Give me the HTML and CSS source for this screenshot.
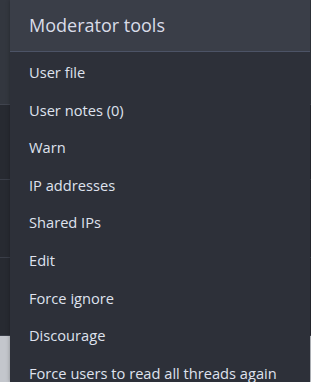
FILE: index.html
```html
<!DOCTYPE html>
<html>
<head>
<meta charset="utf-8">
<link rel="stylesheet" href="styles.css">
</head>
<body>
<div class="page">
  <div class="page-top"></div>
  <div class="page-row r1"></div>
  <div class="page-row r2"></div>
  <div class="page-row r3"></div>
  <div class="page-foot"></div>
</div>
<div class="menu">
  <div class="menu-header">Moderator tools</div>
  <ul class="menu-list">
    <li>User file</li>
    <li>User notes (0)</li>
    <li>Warn</li>
    <li>IP addresses</li>
    <li>Shared IPs</li>
    <li>Edit</li>
    <li>Force ignore</li>
    <li>Discourage</li>
    <li>Force users to read all threads again</li>
  </ul>
</div>
</body>
</html>
```
FILE: styles.css
```css
html, body {
  margin: 0;
  padding: 0;
  height: 100%;
  overflow: hidden;
}
body {
  background: #272a31;
  font-family: "Open Sans", "Noto Sans", sans-serif;
  position: relative;
}
.page {
  display: flex;
  flex-direction: column;
  height: 100%;
}
.page-top {
  height: 104px;
  background: #33373f;
  border-bottom: 1px solid #40444e;
}
.page-row {
  background: #272a31;
  border-bottom: 1px solid #3a3e48;
}
.r1 { height: 74px; }
.r2 { height: 77px; }
.r3 { height: 77px; }
.page-foot {
  flex: 1;
  background: #c3c6cc;
}
.menu {
  position: absolute;
  left: 10px;
  top: 0;
  width: 300px;
  height: 382px;
  background: #2d3039;
  box-shadow: 0 0 4px rgba(0,0,0,0.3);
}
.menu-header {
  height: 52px;
  box-sizing: border-box;
  background: #3a3e48;
  border-bottom: 1px solid #4c5366;
  padding: 0 19px;
  font-size: 18px;
  line-height: 50px;
  color: #d9dce8;
}
.menu-list {
  list-style: none;
  margin: 0;
  padding: 2px 0 0;
}
.menu-list li {
  height: 37.6px;
  line-height: 37.6px;
  padding: 0 19px;
  font-size: 14.65px;
  color: #dfe2ee;
  white-space: nowrap;
}
```
